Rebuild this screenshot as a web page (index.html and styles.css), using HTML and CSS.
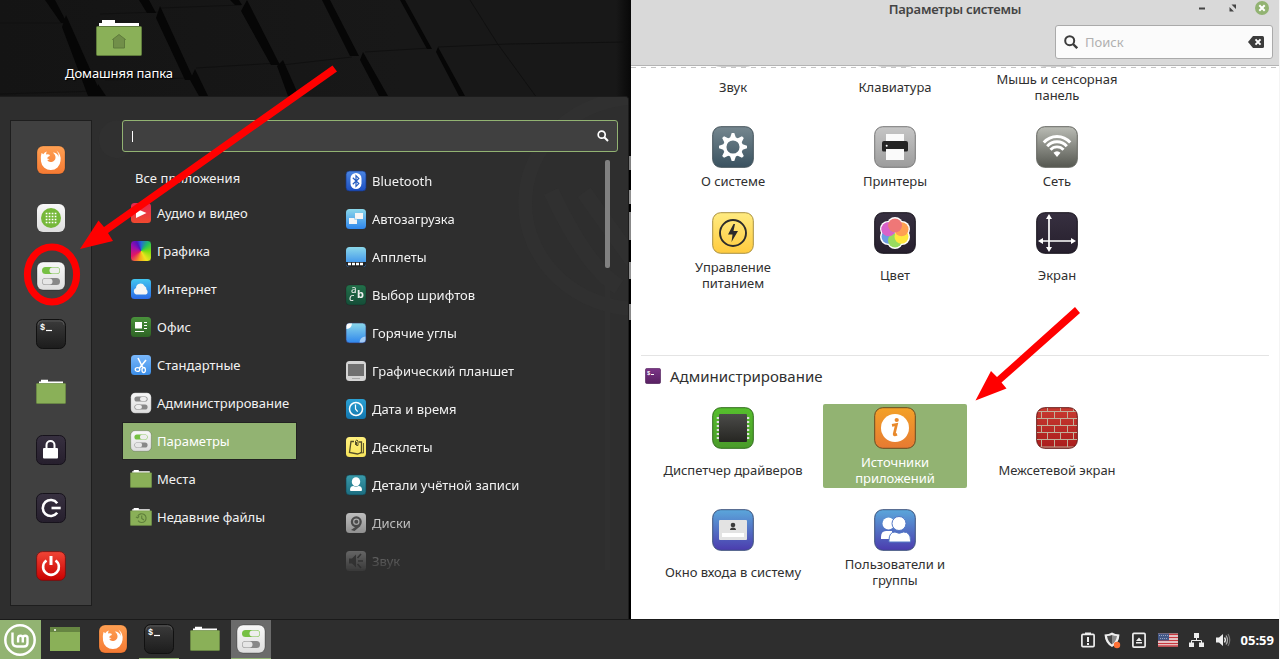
FILE: index.html
```html
<!DOCTYPE html>
<html lang="ru">
<head>
<meta charset="utf-8">
<title>Параметры системы</title>
<link rel="stylesheet" href="styles.css">
</head>
<body>
<svg class="sprite" width="0" height="0" aria-hidden="true">
  <defs>
    <linearGradient id="gOrange" x2="0" y2="1"><stop stop-color="#ffa053"/><stop offset="1" stop-color="#f57a33"/></linearGradient>
    <linearGradient id="gLight" x2="0" y2="1"><stop stop-color="#f8f8f8"/><stop offset="1" stop-color="#dedede"/></linearGradient>
    <linearGradient id="gTerm" x2="0" y2="1"><stop stop-color="#3b3b3b"/><stop offset="1" stop-color="#1c1c1c"/></linearGradient>
    <linearGradient id="gDark" x2="0" y2="1"><stop stop-color="#373040"/><stop offset="1" stop-color="#261f2d"/></linearGradient>
    <linearGradient id="gRed" x2="0" y2="1"><stop stop-color="#f04536"/><stop offset="1" stop-color="#c80000"/></linearGradient>
    <linearGradient id="gMedia" x2="0" y2="1"><stop stop-color="#e5264f"/><stop offset="1" stop-color="#f0492f"/></linearGradient>
    <linearGradient id="gCloud" x2="0" y2="1"><stop stop-color="#42c6f0"/><stop offset="1" stop-color="#2a69e6"/></linearGradient>
    <linearGradient id="gOffice" x2="0" y2="1"><stop stop-color="#49913b"/><stop offset="1" stop-color="#2e6325"/></linearGradient>
    <linearGradient id="gScissors" x2="0" y2="1"><stop stop-color="#7ab8fb"/><stop offset="1" stop-color="#3b8ee8"/></linearGradient>
    <linearGradient id="gBlue" x2="0" y2="1"><stop stop-color="#4a85e2"/><stop offset="1" stop-color="#1c4fc0"/></linearGradient>
    <linearGradient id="gSky" x2="0" y2="1"><stop stop-color="#8bd8ea"/><stop offset="1" stop-color="#2f86ec"/></linearGradient>
    <linearGradient id="gFont" x2="0" y2="1"><stop stop-color="#23704a"/><stop offset="1" stop-color="#154d38"/></linearGradient>
    <linearGradient id="gClock" x2="0" y2="1"><stop stop-color="#2ba1d4"/><stop offset="1" stop-color="#1276ae"/></linearGradient>
    <linearGradient id="gNote" x2="0" y2="1"><stop stop-color="#fff07e"/><stop offset="1" stop-color="#f7e45b"/></linearGradient>
    <linearGradient id="gTeal" x2="0" y2="1"><stop stop-color="#3a9bab"/><stop offset="1" stop-color="#1c6d80"/></linearGradient>
    <linearGradient id="gGrey" x2="0" y2="1"><stop stop-color="#c6c6c6"/><stop offset="1" stop-color="#9c9c9c"/></linearGradient>
    <linearGradient id="gSlate" x2="0" y2="1"><stop stop-color="#75878f"/><stop offset="1" stop-color="#3a5260"/></linearGradient>
    <linearGradient id="gNet" x2="0" y2="1"><stop stop-color="#babcb5"/><stop offset="1" stop-color="#555750"/></linearGradient>
    <linearGradient id="gPower" x2="0" y2="1"><stop stop-color="#ffeb81"/><stop offset="1" stop-color="#ffcb3e"/></linearGradient>
    <linearGradient id="gGreen" x2="0" y2="1"><stop stop-color="#56be2d"/><stop offset="1" stop-color="#4a9b2a"/></linearGradient>
    <linearGradient id="gChip" x2="0" y2="1"><stop stop-color="#4b4b49"/><stop offset="1" stop-color="#262622"/></linearGradient>
    <linearGradient id="gInfo" x2="0" y2="1"><stop stop-color="#f3a127"/><stop offset="1" stop-color="#e67a32"/></linearGradient>
    <linearGradient id="gBrick" x2="0" y2="1"><stop stop-color="#c83a30"/><stop offset="1" stop-color="#aa1d1d"/></linearGradient>
    <linearGradient id="gUser" x2="0" y2="1"><stop stop-color="#5ba7db"/><stop offset="1" stop-color="#4b3cae"/></linearGradient>
    <linearGradient id="gPurple" x2="0" y2="1"><stop stop-color="#7b3587"/><stop offset="1" stop-color="#582062"/></linearGradient>
    <clipPath id="tileClip"><rect x="1" y="1" width="40" height="40" rx="8"/></clipPath>
  </defs>

  <symbol id="i-firefox" viewBox="0 0 30 30">
    <rect x="1" y="1" width="28" height="28" rx="6" fill="url(#gOrange)" stroke="#0004" stroke-width=".6"/>
    <path d="M5.500 8q1 .5 1.700 1.200Q8.500 7 11 6.500q-1.300 1.500-.8 3 2.200-.5 3.800.6-.2 1.400-2.200 2-.5.500-.3 1.900 1-.4 2 .2-1.200.8-2.300.8 1.300 2.500 4.300 2 3.500-.8 4-4 .3-3.200-2.700-5.500 4.700.2 5.700 4.500.6-3.300-2-6.500 5 4 4 10.500A9.800 9.800 0 0 1 5 16.500Q4.500 11 5.500 8z" fill="#fff"/>
  </symbol>
  <symbol id="i-apps" viewBox="0 0 30 30">
    <rect x="1" y="1" width="28" height="28" rx="6" fill="url(#gLight)"/>
    <circle cx="15" cy="15" r="10" fill="#76b83a"/>
    <path d="M9.700 10.500h11M9.700 13.500h11M9.700 16.500h11M9.700 19.500h11" stroke="#fff" stroke-width="1.700" stroke-dasharray="1.700 1.300"/>
  </symbol>
  <symbol id="i-settings" viewBox="0 0 30 30">
    <rect x="1" y="1" width="28" height="28" rx="6" fill="url(#gLight)" stroke="#0007" stroke-width=".6"/>
    <rect x="6" y="6" width="18" height="7" rx="3.500" fill="#76c043"/><rect x="13.500" y="6.500" width="10" height="6" rx="3" fill="#eee"/>
    <rect x="6" y="17" width="18" height="7" rx="3.500" fill="#888"/><rect x="6.500" y="17.500" width="10" height="6" rx="3" fill="#e6e6e6"/>
  </symbol>
  <symbol id="i-admin" viewBox="0 0 30 30">
    <rect x="1" y="1" width="28" height="28" rx="6" fill="url(#gLight)" stroke="#0007" stroke-width=".6"/>
    <rect x="6" y="6" width="18" height="7" rx="3.500" fill="#888"/><rect x="13.500" y="6.800" width="9.500" height="5.400" rx="2.700" fill="#eee"/>
    <rect x="6" y="17" width="18" height="7" rx="3.500" fill="#888"/><rect x="6.800" y="17.800" width="9.500" height="5.400" rx="2.700" fill="#eee"/>
  </symbol>
  <symbol id="i-folder" viewBox="0 0 30 26">
    <path d="M3 5V2.500h2V.800h7v1.700h15V6H3z" fill="#fff"/>
    <rect x=".4" y="4.500" width="29.200" height="20" rx=".8" fill="#8ab058" stroke="#6c8c44" stroke-width=".7"/>
  </symbol>
  <symbol id="i-recent" viewBox="0 0 30 26">
    <use href="#i-folder"/>
    <path d="M10.500 12a6 6 0 1 1 .5 6M8 13l2.500 1 2-2M16 11v4l3 2" fill="none" stroke="#5f7f3b" stroke-width="1.500"/>
  </symbol>
  <symbol id="i-lock" viewBox="0 0 30 30">
    <rect x=".5" y=".5" width="29" height="29" rx="6" fill="url(#gDark)" stroke="#17131c"/>
    <path d="M10.500 14v-4a4 4 0 0 1 8 0v4" fill="none" stroke="#fff" stroke-width="2"/>
    <rect x="7" y="13" width="15" height="10.500" rx="1" fill="#fff"/>
  </symbol>
  <symbol id="i-logout" viewBox="0 0 30 30">
    <rect x=".5" y=".5" width="29" height="29" rx="6" fill="url(#gDark)" stroke="#17131c"/>
    <path d="M21.200 10.200a8 8 0 1 0 0 9.600" fill="none" stroke="#fff" stroke-width="2.600"/>
    <path d="M15.500 15h9.200" stroke="#fff" stroke-width="2.600"/>
  </symbol>
  <symbol id="i-power" viewBox="0 0 30 30">
    <rect x=".6" y=".6" width="28.800" height="28.800" rx="6" fill="url(#gRed)" stroke="#701010" stroke-width=".8"/>
    <path d="M10.500 9.500a7.900 7.900 0 1 0 9 0" fill="none" stroke="#fff" stroke-width="2.600"/>
    <path d="M15 5v9" stroke="#fff" stroke-width="3"/>
  </symbol>

  <symbol id="i-media" viewBox="0 0 22 22"><rect x="1" y="1" width="20" height="20" rx="3.500" fill="url(#gMedia)"/><path d="M6 6.500l10.500 4.500L6 16z" fill="#fff"/></symbol>
  <symbol id="i-cloud" viewBox="0 0 22 22"><rect x="1" y="1" width="20" height="20" rx="3.500" fill="url(#gCloud)"/><path d="M6 16.500a3.500 3.500 0 0 1 0-6.500 4.500 4.500 0 0 1 8.500-2 3.500 3.500 0 0 1 2 3.500 3 3 0 0 1-.5 5z" fill="#f5f5f5"/></symbol>
  <symbol id="i-office" viewBox="0 0 22 22"><rect x="1" y="1" width="20" height="20" rx="3.500" fill="url(#gOffice)"/><path d="M5 6h7v6.500H5z" fill="#fff"/><path d="M14 6.500h3M14 9.500h3M14 12.500h3M5 15.500h9" stroke="#fff"/></symbol>
  <symbol id="i-scissors" viewBox="0 0 22 22"><rect x="1" y="1" width="20" height="20" rx="3.500" fill="url(#gScissors)"/><g fill="none" stroke="#fff" stroke-width="1.300"><path d="M8 4l4.500 9M16 6l-6.500 8" stroke-width="1.600"/><ellipse cx="7.500" cy="15.500" rx="2.300" ry="1.900"/><ellipse cx="13.700" cy="16" rx="1.700" ry="2.500"/></g></symbol>
  <symbol id="i-bluetooth" viewBox="0 0 22 22"><rect x="1" y="1" width="20" height="20" rx="3.500" fill="url(#gBlue)" stroke="#18357e" stroke-width=".7"/><rect x="5.500" y="3" width="11" height="16" rx="5.500" fill="#fff"/><path d="M7.800 7.800l6 5.800-2.800 2.800V5.600l2.800 2.800-6 5.800" fill="none" stroke="#245bc0" stroke-width="1.200"/></symbol>
  <symbol id="i-startup" viewBox="0 0 22 22"><rect x="1" y="1" width="20" height="20" rx="3.500" fill="url(#gSky)"/><path d="M4 10h8v6H4zM10 5h8v6h-8z" fill="#f5f5f5"/><path d="M9.700 10v1.300h2.500" fill="none" stroke="#6bb8e6" stroke-width=".6"/></symbol>
  <symbol id="i-applets" viewBox="0 0 22 22"><rect x="1" y="1" width="20" height="20" rx="3.500" fill="url(#gSky)"/><path d="M1 16h20v1q0 4-4 4H5q-4 0-4-4z" fill="#222"/><path d="M3 18h15" stroke="#fff" stroke-width="2.700" stroke-dasharray="3 1"/></symbol>
  <symbol id="i-corners" viewBox="0 0 22 22"><rect x="1" y="1" width="20" height="20" rx="3.500" fill="url(#gSky)" stroke="#3a315c" stroke-width=".6"/><path d="M1.500 7V4q0-2.500 2.500-2.500h3Q6.500 6.500 1.500 7z" fill="#fff"/><path d="M20.500 14.500v3q0 3-3 3h-3q.5-5.500 6-6z" fill="#fff8"/></symbol>
  <symbol id="i-tablet" viewBox="0 0 22 22"><rect x="1" y="1" width="20" height="20" rx="3.500" fill="#d4d4d4"/><path d="M3 4h16v12H3z" fill="#707070"/><path d="M7 18.500h8" stroke="#aaa"/></symbol>
  <symbol id="i-clock" viewBox="0 0 22 22"><rect x="1" y="1" width="20" height="20" rx="3.500" fill="url(#gClock)"/><circle cx="11" cy="11" r="6.500" fill="none" stroke="#fff" stroke-width="1.500"/><path d="M10.500 6.500V11l2.200 2.600" fill="none" stroke="#fff" stroke-width="1.200"/></symbol>
  <symbol id="i-notes" viewBox="0 0 22 22"><rect x="1" y="1" width="20" height="20" rx="3.500" fill="url(#gNote)"/><path d="M9 5.500H6L4.500 16.500l8 1.500 4-1.500V6H14" fill="none" stroke="#554f28" stroke-width="1.300"/><path d="M10.500 9V5q1.500-2 2.500 0v4.500h-1.500V6" fill="none" stroke="#554f28"/><path d="M15 16.500l3.500.5V7" fill="none" stroke="#554f28" stroke-width=".9"/></symbol>
  <symbol id="i-account" viewBox="0 0 22 22"><rect x="1" y="1" width="20" height="20" rx="3.500" fill="url(#gTeal)" stroke="#123e49" stroke-width=".6"/><ellipse cx="11" cy="7.800" rx="4.200" ry="4.500" fill="#fff"/><path d="M5 16q0-4 3.500-4 2.500 1.500 5 0 3.500 0 3.500 4 0 1-1 1H6q-1 0-1-1z" fill="#fff"/></symbol>
  <symbol id="i-disks" viewBox="0 0 22 22"><rect x="1" y="1" width="20" height="20" rx="3.500" fill="#d0d0d0"/><circle cx="11.300" cy="9.800" r="5.500" fill="#525252"/><circle cx="11.300" cy="9.800" r="2.600" fill="none" stroke="#d0d0d0" stroke-width="1.200"/><path d="M6 18l6.500-4.500 3.300.3L9.500 19z" fill="#555"/></symbol>
  <symbol id="i-sound" viewBox="0 0 22 22"><rect x="1" y="1" width="20" height="20" rx="3.500" fill="#ccc"/><path d="M4 8.500h3l4-4v13l-4-4H4z" fill="#444"/><path d="M12.500 8l3.500-4M13 11h5M12.500 14l3.500 4" stroke="#444" stroke-width="1.600"/></symbol>

  <symbol id="i-gear" viewBox="0 0 42 42"><rect x=".7" y=".7" width="40.600" height="40.600" rx="8" fill="url(#gSlate)" stroke="#44535b"/><circle cx="21" cy="21" r="8.300" fill="none" stroke="#fff" stroke-width="3.500"/><g fill="#fff"><path id="tooth" d="M18 12l1.700-5h2.600l1.700 5zM18 30l1.700 5h2.600l1.700-5zM12 18l-5 1.700v2.600l5 1.700zM30 18l5 1.700v2.600L30 24z"/><use href="#tooth" transform="rotate(45 21 21)"/></g></symbol>
  <symbol id="i-printer" viewBox="0 0 42 42"><rect x=".7" y=".7" width="40.600" height="40.600" rx="8" fill="url(#gGrey)" stroke="#777"/><path d="M12 8h18v7H12z" fill="#fafafa"/><path d="M8 17q0-2 2-2h22q2 0 2 2v7q0 1.500-1.500 1.500H9.500Q8 25.500 8 24z" fill="#242424"/><path d="M12 23h18v11H12z" fill="#fafafa"/><circle cx="12.700" cy="19.700" r="1" fill="#fff"/></symbol>
  <symbol id="i-wifi" viewBox="0 0 42 42"><rect x=".7" y=".7" width="40.600" height="40.600" rx="8" fill="url(#gNet)" stroke="#646660"/><path d="M17.500 26.800a4.800 4.800 0 0 1 7 0L21 31z" fill="#fff"/><path d="M7.800 16.500a17.400 17.400 0 0 1 26.400 0M11.200 20.200a13 13 0 0 1 19.600 0M14.500 23.800a8.700 8.700 0 0 1 13 0" fill="none" stroke="#fff" stroke-width="2.900"/></symbol>
  <symbol id="i-energy" viewBox="0 0 42 42"><rect x=".7" y=".7" width="40.600" height="40.600" rx="8" fill="url(#gPower)" stroke="#a99040"/><circle cx="21" cy="21" r="13" fill="none" stroke="#2c2b2b" stroke-width="1.900"/><path d="M21.500 12L16 22.500h4.500L19.500 30 26 19h-4.500l1.500-7z" fill="#2c2b2b"/></symbol>
  <symbol id="i-color" viewBox="0 0 42 42"><rect x=".7" y=".7" width="40.600" height="40.600" rx="8" fill="url(#gDark)" stroke="#17131c"/><g fill="#fff"><circle cx="21" cy="13" r="8"/><circle cx="28" cy="17" r="8"/><circle cx="28" cy="25" r="8"/><circle cx="21" cy="29" r="8"/><circle cx="14" cy="25" r="8"/><circle cx="14" cy="17" r="8"/></g><circle cx="14.500" cy="17.300" r="7" fill="#d962c9"/><circle cx="14.500" cy="24.700" r="7" fill="#6c9ce3"/><circle cx="21" cy="28.500" r="7" fill="#98dc5e"/><circle cx="27.500" cy="24.700" r="7" fill="#ffe83e"/><circle cx="27.500" cy="17.300" r="7" fill="#ffa052"/><circle cx="21" cy="13.500" r="7" fill="#ef7777"/><path d="M14.500 10.300a7 7 0 0 0 0 14q3.500 0 6.500-3.600-6-1-7-6 0-3 .5-4.400z" fill="#d962c9"/></symbol>
  <symbol id="i-display" viewBox="0 0 42 42"><rect x=".7" y=".7" width="40.600" height="40.600" rx="8" fill="url(#gDark)" stroke="#17131c"/><path d="M13 4.500v33M4 29h34" stroke="#fff" stroke-width="1.700"/><path d="M13 2l3 5h-6zM13 40l3-5h-6zM2 29l5-3v6zM40 29l-5-3v6z" fill="#fff"/></symbol>
  <symbol id="i-driver" viewBox="0 0 42 42"><rect x=".7" y=".7" width="40.600" height="40.600" rx="8" fill="url(#gGreen)" stroke="#2f6c1a"/><path d="M6 10v23M36 10v23" stroke="#e0e0e0" stroke-width="2.500" stroke-dasharray="2 2"/><rect x="7" y="7" width="28" height="28" rx="1" fill="url(#gChip)"/></symbol>
  <symbol id="i-info" viewBox="0 0 42 42"><rect x=".7" y=".7" width="40.600" height="40.600" rx="8" fill="url(#gInfo)" stroke="#694a20"/><circle cx="21" cy="21" r="14" fill="#fff"/><circle cx="22.700" cy="13" r="2.100" fill="#e8892c"/><path d="M18 18.300l4.500-.8-2.300 9.500q-.2 1.500 2.800.3" fill="none" stroke="#e8892c" stroke-width="2.700"/></symbol>
  <symbol id="i-brick" viewBox="0 0 42 42"><rect x=".7" y=".7" width="40.600" height="40.600" rx="8" fill="url(#gBrick)" stroke="#651a18"/><path clip-path="url(#tileClip)" d="M0 4.500h42M0 11.500h42M0 18.500h42M0 25.500h42M0 32.500h42M0 40h42M11.500 0v5M24.500 0v5M37.500 0v5M5.500 5v7M18.500 5v7M31.500 5v7M11.500 12v7M24.500 12v7M37.500 12v7M5.500 19v7M18.500 19v7M31.500 19v7M11.500 26v7M24.500 26v7M37.500 26v7M5.500 33v7M18.500 33v7M31.500 33v7" fill="none" stroke="#c0b09a"/></symbol>
  <symbol id="i-login" viewBox="0 0 42 42"><rect x=".7" y=".7" width="40.600" height="40.600" rx="8" fill="url(#gUser)" stroke="#3d527c"/><rect x="7" y="11" width="28" height="20" rx="1" fill="#e3e3e3"/><circle cx="21" cy="16" r="2.300" fill="#3c3c3c"/><path d="M18 21q0-2.500 3-2.500t3 2.500z" fill="#3c3c3c"/><path d="M10 24h22v4H10z" fill="#fff"/></symbol>
  <symbol id="i-users" viewBox="0 0 42 42"><rect x=".7" y=".7" width="40.600" height="40.600" rx="8" fill="url(#gUser)" stroke="#3d527c"/><g fill="#fff"><circle cx="14.500" cy="14.500" r="6"/><path d="M7 30v-2q0-6 5-6h6v8z"/></g><g fill="#fff" stroke="#5378c6" stroke-width="1"><path d="M15 33v-1.500q0-8.500 6-8.500 4 2.500 8.500 0 7 0 7 8.500V33z"/><circle cx="25" cy="14.500" r="7"/></g></symbol>
</svg>

<div class="screen">
  <main class="desktop">
    <svg class="wallpaper" viewBox="0 0 631 97" width="631" height="97" aria-hidden="true">
      <g fill="none" stroke="#101010"><path d="M0 23H64M100 14l58-2M196 68l82-5M0 94l98-3M241 5l-80 3M105 80l85-2M282 65l70-8M365 52l65-4M438 47l70-3 120-2M470 0l27 43 40 55"/></g>
      <g fill="#060606"><path d="M45 0h10l12 23h-6zM66 15l36 81H88L62 27zM98 84l8 12H96zM139 0h10l7 13h-9zM160 6l34 74h-9L156 18zM195 69l13 27h-9l-9-16zM230 0h9l3 5h-7zM247 0l33 65h-9L241 11zM283 60l16 36H288L277 66zM322 0h8l29 56h-9zM363 52l25 44h-9L360 60zM400 0h5l27 49h-5zM438 47l27 49h-6L436 52z"/></g>
    </svg>
    <div class="home">
      <svg class="home-icon" viewBox="0 0 46 37" width="46" height="37"><path d="M3 7V3h3V0h13v3h24v4z" fill="#fff"/><rect x=".5" y="6.500" width="45" height="29" rx="1" fill="#8ab058" stroke="#5f7b3c"/><path d="M16.500 19.500l6.500-5 6.500 5h-1V28h-11v-8.500z" fill="#718f49" stroke="#5f7b3c"/></svg>
      <span>Домашняя папка</span>
    </div>

    <section class="menu">
      <svg class="watermark" viewBox="0 0 629 522" width="628" height="522" aria-hidden="true"><g fill="none" stroke="#303030"><ellipse cx="640" cy="106" rx="114" ry="106" stroke-width="14"/><path d="M552 94q35 75 68 96M585 95l50 70" stroke-width="16"/></g><ellipse cx="117" cy="42" rx="18" ry="19" fill="#303030"/></svg>
      <nav class="favorites">
        <svg class="fav"><use href="#i-firefox"/></svg>
        <svg class="fav"><use href="#i-apps"/></svg>
        <svg class="fav"><use href="#i-settings"/></svg>
        <svg class="fav" viewBox="0 0 30 30"><rect x=".5" y=".5" width="29" height="29" rx="6" fill="url(#gTerm)" stroke="#111"/><path d="M2 6q0-4 4-4h18q4 0 4 4" fill="none" stroke="#fff3" stroke-width=".7"/><text class="prompt" x="4" y="10.500">$</text><path d="M10 11.500h6" stroke="#fff" stroke-width="1.200"/></svg>
        <svg class="fav"><use href="#i-folder"/></svg>
        <svg class="fav"><use href="#i-lock"/></svg>
        <svg class="fav"><use href="#i-logout"/></svg>
        <svg class="fav"><use href="#i-power"/></svg>
      </nav>
      <div class="menu-body">
        <div class="menu-search"><span class="caret"></span><svg viewBox="0 0 12 12" width="12" height="12"><circle cx="4.700" cy="4.700" r="3.500" fill="none" stroke="#fff" stroke-width="1.700"/><path d="M7.300 7.300l3.700 3.700" stroke="#fff" stroke-width="2"/></svg></div>
        <div class="columns">
          <ul class="categories">
            <li class="all">Все приложения</li>
            <li><svg class="ico"><use href="#i-media"/></svg>Аудио и видео</li>
            <li><span class="ico spectrum"></span>Графика</li>
            <li><svg class="ico"><use href="#i-cloud"/></svg>Интернет</li>
            <li><svg class="ico"><use href="#i-office"/></svg>Офис</li>
            <li><svg class="ico"><use href="#i-scissors"/></svg>Стандартные</li>
            <li><svg class="ico"><use href="#i-admin"/></svg>Администрирование</li>
            <li class="selected"><svg class="ico"><use href="#i-settings"/></svg>Параметры</li>
            <li><svg class="ico"><use href="#i-folder"/></svg>Места</li>
            <li><svg class="ico"><use href="#i-recent"/></svg>Недавние файлы</li>
          </ul>
          <ul class="apps">
            <li><svg class="ico"><use href="#i-bluetooth"/></svg>Bluetooth</li>
            <li><svg class="ico"><use href="#i-startup"/></svg>Автозагрузка</li>
            <li><svg class="ico"><use href="#i-applets"/></svg>Апплеты</li>
            <li><svg class="ico" viewBox="0 0 22 22"><rect x="1" y="1" width="20" height="20" rx="3.500" fill="url(#gFont)" stroke="#0005" stroke-width=".5"/><g fill="#eee"><text x="6" y="9" font-size="10">a</text><text x="12" y="14" font-size="11" font-weight="bold">b</text><text x="4" y="17" font-size="11" font-style="italic">c</text></g></svg>Выбор шрифтов</li>
            <li><svg class="ico"><use href="#i-corners"/></svg>Горячие углы</li>
            <li><svg class="ico"><use href="#i-tablet"/></svg>Графический планшет</li>
            <li><svg class="ico"><use href="#i-clock"/></svg>Дата и время</li>
            <li><svg class="ico"><use href="#i-notes"/></svg>Десклеты</li>
            <li><svg class="ico"><use href="#i-account"/></svg>Детали учётной записи</li>
            <li><svg class="ico"><use href="#i-disks"/></svg>Диски</li>
            <li><svg class="ico"><use href="#i-sound"/></svg>Звук</li>
          </ul>
          <div class="scrollbar"><div class="thumb"></div></div>
        </div>
      </div>
    </section>

    <section class="window">
      <header class="titlebar">
        <h1>Параметры системы</h1>
        <div class="controls">
          <svg viewBox="0 0 76 16" width="76" height="16"><path d="M4 8.500h6" stroke="#444" stroke-width="2"/><path d="M36.500 4.500H41V9zM39 11.500h-4.500V7z" fill="#444"/><circle cx="67" cy="8" r="7" fill="#92b372"/><path d="M64.300 5.300l5.400 5.400M69.700 5.300l-5.400 5.400" stroke="#fff" stroke-width="2"/></svg>
        </div>
        <div class="search">
          <svg viewBox="0 0 14 14" width="14" height="14"><circle cx="5.700" cy="5.700" r="4.500" fill="none" stroke="#3c3c3c" stroke-width="2"/><path d="M9 9l4.200 4.200" stroke="#3c3c3c" stroke-width="2.400"/></svg>
          <span>Поиск</span>
          <svg viewBox="0 0 16 12" width="16" height="12"><path d="M0 6l5-6h9.500Q16 0 16 1.500v9q0 1.500-1.500 1.500H5z" fill="#3c3c3c"/><path d="M7.500 3.300l5 5.400M12.500 3.300l-5 5.400" stroke="#fff" stroke-width="1.900"/></svg>
        </div>
      </header>
      <div class="content">
        <div class="grid preferences">
          <div class="tile"><span class="tile-icon edge"></span><span class="label">Звук</span></div>
          <div class="tile"><span class="tile-icon edge"></span><span class="label">Клавиатура</span></div>
          <div class="tile"><span class="tile-icon edge"></span><span class="label">Мышь и сенсорная<br>панель</span></div>
          <div class="tile"><svg class="tile-icon"><use href="#i-gear"/></svg><span class="label">О системе</span></div>
          <div class="tile"><svg class="tile-icon"><use href="#i-printer"/></svg><span class="label">Принтеры</span></div>
          <div class="tile"><svg class="tile-icon"><use href="#i-wifi"/></svg><span class="label">Сеть</span></div>
          <div class="tile"><svg class="tile-icon"><use href="#i-energy"/></svg><span class="label">Управление<br>питанием</span></div>
          <div class="tile"><svg class="tile-icon"><use href="#i-color"/></svg><span class="label">Цвет</span></div>
          <div class="tile"><svg class="tile-icon"><use href="#i-display"/></svg><span class="label">Экран</span></div>
        </div>
        <h2><svg viewBox="0 0 16 16" width="16" height="16"><rect x=".3" y=".3" width="15.400" height="15.400" rx="2" fill="url(#gPurple)" stroke="#421b4a" stroke-width=".5"/><text class="prompt small" x="2" y="6.500">$</text><path d="M6 6.500h3" stroke="#fff"/></svg>Администрирование</h2>
        <div class="grid">
          <div class="tile"><svg class="tile-icon"><use href="#i-driver"/></svg><span class="label">Диспетчер драйверов</span></div>
          <div class="tile chosen"><svg class="tile-icon"><use href="#i-info"/></svg><span class="label">Источники<br>приложений</span></div>
          <div class="tile"><svg class="tile-icon"><use href="#i-brick"/></svg><span class="label">Межсетевой экран</span></div>
          <div class="tile"><svg class="tile-icon"><use href="#i-login"/></svg><span class="label">Окно входа в систему</span></div>
          <div class="tile"><svg class="tile-icon"><use href="#i-users"/></svg><span class="label">Пользователи и<br>группы</span></div>
        </div>
      </div>
    </section>
  </main>

  <footer class="taskbar">
    <div class="start"><svg viewBox="0 0 34 34" width="34" height="34"><circle cx="17" cy="17" r="14.700" fill="none" stroke="#fff" stroke-width="2.500"/><path d="M9.500 9.500V19q0 4.500 4.500 4.500h7q3.500 0 3.500-3.500v-5q0-2.300-2.300-2.300t-2.400 2.300v4.500M19.800 15q0-2.300-2.300-2.300t-2.400 2.300v4.500" fill="none" stroke="#fff" stroke-width="2.400"/></svg></div>
    <div class="launchers">
      <span class="task"><svg viewBox="0 0 30 24" width="30" height="24"><path d="M0 0h30v24H0z" fill="#8ab058"/><path d="M0 0h30v5H0z" fill="#668542"/><circle cx="5" cy="3" r="1" fill="#fff"/></svg></span>
      <span class="task first-app"><svg class="fav"><use href="#i-firefox"/></svg></span>
      <span class="task running"><svg class="fav" viewBox="0 0 30 30"><rect x=".5" y=".5" width="29" height="29" rx="6" fill="url(#gTerm)" stroke="#111"/><path d="M2 6q0-4 4-4h18q4 0 4 4" fill="none" stroke="#fff3" stroke-width=".7"/><text class="prompt" x="4" y="10.500">$</text><path d="M10 11.500h6" stroke="#fff" stroke-width="1.200"/></svg></span>
      <span class="task"><svg class="fav"><use href="#i-folder"/></svg></span>
      <span class="task running focused"><svg class="fav"><use href="#i-settings"/></svg></span>
    </div>
    <div class="tray">
      <svg viewBox="0 0 135 20" width="135" height="20">
        <g fill="none" stroke="#eee" stroke-width="1.700"><rect x="1.900" y="4.400" width="12.200" height="12.200" rx="1"/><rect x="52.900" y="3.400" width="12.200" height="13.700" rx="1"/></g>
        <path d="M5 2.500h6V5H5zM7 7h2v5H7zM7 13h2v2H7zM56 12h6v1.500h-6zM56 11l3-3.500 3 3.500z" fill="#eee"/>
        <path d="M32 2.500q3 2 7.500 2-.5 9-7.500 12.500-7-3.500-7.500-12.500 4.500 0 7.500-2z" fill="#eee"/><path d="M32 5v9.500q-4-2.500-5-8.500 3 0 5-1z" fill="#494949"/><path d="M32 5q2 1 5 1-1 6-5 8.500z" fill="#8a8a8a"/><circle cx="37" cy="15" r="3.200" fill="#ff7135"/>
        <path d="M78 3.500h20v13H78z" fill="#eee"/><path d="M78 4.500h20M78 7.500h20M78 10.500h20M78 13.500h20M78 16h20" stroke="#c9383f" stroke-width="1.300"/><path d="M78 3.500h11v7H78z" fill="#435887"/><path d="M79 5.500h9M80 8.500h8" stroke="#9aa6c3" stroke-dasharray="1 1"/>
        <path d="M114 3h5v5h-5zM109 12.500h5v4.500h-5zM119 12.500h5v4.500h-5z" fill="#eee"/><path d="M116.500 8v2.500M111.500 13v-2.500h10V13" fill="none" stroke="#eee"/>
      </svg>
      <svg viewBox="0 0 16 16" width="16" height="16"><path d="M1 5.500h3L8 2v12L4 10.500H1z" fill="#eee"/><path d="M9.500 5.500q1.800 2.500 0 5" fill="none" stroke="#eee" stroke-width="1.300"/><path d="M11 3.500q3 4.500 0 9" fill="none" stroke="#aaa" stroke-width="1.300"/><path d="M13 2q3.500 6 0 12" fill="none" stroke="#777" stroke-width="1.200"/></svg>
      <span class="time">05:59</span>
    </div>
  </footer>

  <svg class="annotations" viewBox="0 0 1280 659" width="1280" height="659" aria-hidden="true">
    <ellipse cx="52" cy="274.500" rx="24.600" ry="27.500" fill="none" stroke="#f00" stroke-width="7"/>
    <path d="M80 249l18.500-28.500 5.500 6.500L332.500 65.500l4.500 6L108 233l5 8zM975.500 400.500L991 371l6 6 78-70 5 6-78.500 69.500 5 6z" fill="#f00"/>
  </svg>
</div>
</body>
</html>
```
FILE: styles.css
```css
* { box-sizing: border-box; }
body { margin: 0; background: #f4f4f4; font: 13px/16px "Noto Sans", sans-serif; letter-spacing: 0; }
ul, h1, h2 { margin: 0; padding: 0; list-style: none; }
svg { display: block; flex: none; }
.sprite { position: absolute; }

.screen { position: relative; display: flex; flex-direction: column; width: 1280px; height: 659px; overflow: hidden; }
.desktop {
  position: relative; flex: 1; overflow: hidden;
  background:
    linear-gradient(#0000 156px, #808080 156px 170px, #000 170px 190px, #909090 190px 204px, #000 204px 212px, #888 212px 240px, #000 240px 262px, #909090 262px 279px, #000 279px 304px, #888 304px 320px, #000 320px) 0 0 / 631px 100% no-repeat,
    linear-gradient(90deg, #141414, #181818 400px 616px, #080808 631px) 0 0 / 631px 100% no-repeat;
}
.wallpaper { position: absolute; left: 0; top: 0; }
.home {
  position: absolute; left: 59px; top: 20px; width: 120px;
  display: flex; flex-direction: column; align-items: center; gap: 8px;
  color: #fff; white-space: nowrap; text-shadow: 1px 1px 1px #000; letter-spacing: -.1px;
}
.prompt { font: bold 8.500px "Liberation Mono", monospace; fill: #fff; }
.prompt.small { font-size: 5.500px; }

/* Start menu */
.menu {
  position: absolute; left: 0; top: 96px; width: 629px; height: 523px;
  display: flex; gap: 30px; padding: 24px 0 13px 10px;
  background: #2e2e2e; border: solid #1c1c1c; border-width: 1px 1px 0 0;
  border-radius: 0 4px 0 0; color: #f2f2f2; overflow: hidden;
}
.watermark { position: absolute; left: 0; top: 0; }
.favorites {
  position: relative; width: 82px; height: 486px; margin-top: -1px; padding-top: 24px;
  display: flex; flex-direction: column; align-items: center; gap: 28px;
  background: #404040; border: 1px solid #1e1e1e;
}
.fav { width: 30px; height: 30px; }
.menu-body { position: relative; width: 496px; margin-top: -1px; }
.menu-search {
  height: 32px; padding: 0 8px 0 9px; display: flex; align-items: center; justify-content: space-between;
  border: 1px solid #92b372; border-radius: 3px; background: #404040;
}
.caret { width: 1px; height: 11px; background: #fff; }
.columns { display: flex; padding-top: 8px; }
.categories { width: 175px; padding-top: 3px; }
.categories li, .apps li { display: flex; align-items: center; gap: 5px; height: 38px; padding: 0 0 0 8px; white-space: nowrap; }
.categories li.all { height: 31px; padding: 0 0 2px 13px; letter-spacing: .05px; }
.categories li.selected { padding-left: 7px; color: #fff; background: #92b372; border: 1px solid #222; }
.ico { flex: none; width: 22px; height: 22px; }
.spectrum { border: 1px solid #2e2e2e; border-radius: 4px; background: conic-gradient(from 0deg, #2465dc, #24bf5e, #7bdc10 90deg, #eee51f 150deg, #f8a31c 190deg, #df1666 240deg, #970eb0 300deg, #5111ba 335deg, #2465dc); }
.apps {
  width: 300px; height: 412px; padding: 2px 0 0 48px; overflow: hidden;
  -webkit-mask-image: linear-gradient(#000 345px, #0000 416px); mask-image: linear-gradient(#000 345px, #0000 416px);
}
.apps li { padding-left: 0; }
.scrollbar { width: 5px; margin-left: 8px; height: 410px; background: #303030; }
.thumb { height: 108px; border-radius: 2px; background: #818181; }

/* Settings window */
.window { position: absolute; left: 631px; top: 0; width: 648px; height: 619px; background: #fff; color: #303030; overflow: hidden; }
.titlebar {
  display: grid; grid-template: 25px 40px / 1fr auto; height: 66px; padding-right: 6px;
  background: #d9d9d9; border-bottom: 1px solid #b4b4b4;
}
.titlebar h1 { grid-area: 1 / 1 / 2 / 3; height: 19px; padding-left: 6px; text-align: center; font-size: 13px; line-height: 19px; font-weight: 600; letter-spacing: -.2px; color: #444; }
.controls { grid-area: 1 / 2; justify-self: end; margin-right: 1px; padding-right: 1px; }
.search {
  grid-area: 2 / 2; width: 218px; height: 34px; padding: 0 8px; display: flex; align-items: center; gap: 7px;
  background: #fbfbfb; border: 1px solid #aaa; border-radius: 3px; color: #b0b0b0;
}
.search span { flex: 1; }
.content { height: 553px; overflow: hidden; padding: 0 10px; position: relative; }
.content::before {
  content: ""; position: absolute; left: 0; right: 0; top: 1px; height: 1px;
  background: repeating-linear-gradient(90deg, #c4c4c4 0 5px, #fff 5px 10px);
}
.grid { display: grid; grid-template-columns: repeat(3, 144px); gap: 18px; margin-left: 20px; }
.preferences { height: 334px; margin-top: -45px; align-content: start; }
.tile { display: flex; flex-direction: column; align-items: center; padding: 3px 0 2px; border-radius: 2px; text-align: center; }
.tile-icon { width: 42px; height: 42px; margin-bottom: 5px; flex: none; }
.edge { border-radius: 8px; box-shadow: 0 1px 1px #ccc; }
.label { flex: 1; display: flex; align-items: center; white-space: nowrap; letter-spacing: -.03px; }
.chosen { background: #92b372; color: #fff; }
h2 {
  display: flex; align-items: center; gap: 9px; height: 49px; padding: 0 0 9px 4px;
  border-top: 1px solid #e4e4e4; font-size: 15px; font-weight: 400; line-height: 20px;
}

/* Panel */
.taskbar { display: flex; width: 1279px; height: 40px; background: #2e2e2e; border-top: 1px solid #1a1a1a; }
.start { width: 41px; padding: 3px; background: #92b372; }
.launchers { display: flex; gap: 6px; margin-left: 4px; }
.task { width: 40px; display: flex; align-items: center; justify-content: center; border-bottom: 1px solid #0000; }
.first-app { margin-left: 2px; }
.running { border-bottom-color: #92b372; }
.focused { background: #6b6b6b; }
.tray { margin-left: auto; display: flex; align-items: center; padding: 1px 5px 0 0; color: #fff; }
.time { margin-left: 10px; font-weight: 700; }

.annotations { position: absolute; left: 0; top: 0; }
```
